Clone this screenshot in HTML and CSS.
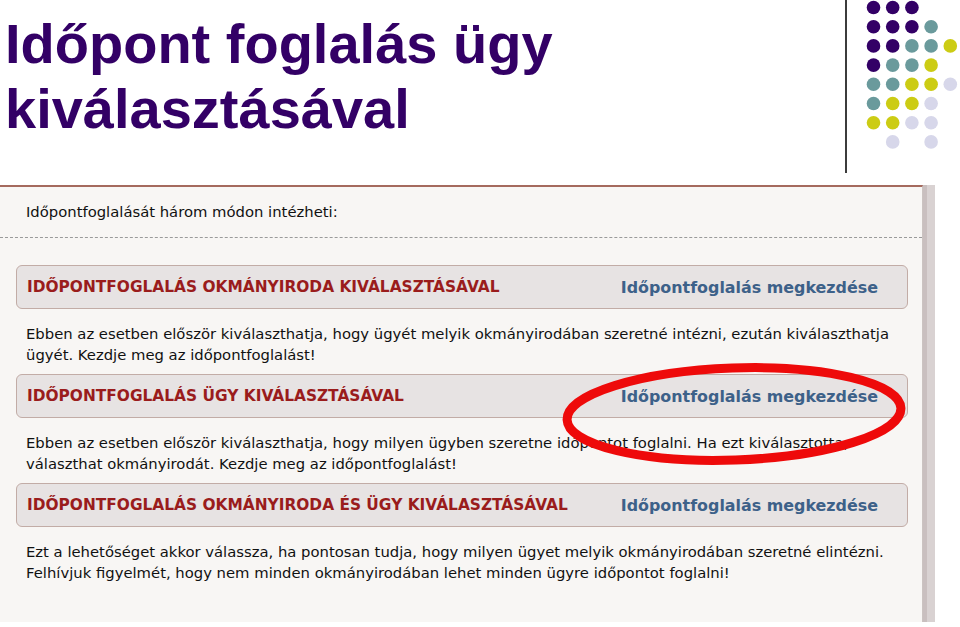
FILE: index.html
```html
<!DOCTYPE html>
<html lang="hu">
<head>
<meta charset="utf-8">
<title>Időpont foglalás ügy kiválasztásával</title>
<link rel="stylesheet" href="styles.css">
</head>
<body>
<header class="slide-head">
  <h1 class="title">Időpont foglalás ügy<br>kiválasztásával</h1>
  <div class="rule"></div>
  <svg class="dots" width="105" height="160" viewBox="0 0 105 160" aria-hidden="true">
    <g fill="#330066">
      <circle cx="18.5" cy="7.5" r="6.8"/><circle cx="37.7" cy="7.5" r="6.8"/><circle cx="56.9" cy="7.5" r="6.8"/>
      <circle cx="18.5" cy="26.7" r="6.8"/><circle cx="37.7" cy="26.7" r="6.8"/><circle cx="56.9" cy="26.7" r="6.8"/>
      <circle cx="18.5" cy="45.9" r="6.8"/><circle cx="37.7" cy="45.9" r="6.8"/>
      <circle cx="18.5" cy="65.1" r="6.8"/>
    </g>
    <g fill="#6a9a9c">
      <circle cx="76.1" cy="26.7" r="6.8"/>
      <circle cx="56.9" cy="45.9" r="6.8"/><circle cx="76.1" cy="45.9" r="6.8"/>
      <circle cx="37.7" cy="65.1" r="6.8"/><circle cx="56.9" cy="65.1" r="6.8"/>
      <circle cx="18.5" cy="84.3" r="6.8"/><circle cx="37.7" cy="84.3" r="6.8"/>
      <circle cx="18.5" cy="103.5" r="6.8"/>
    </g>
    <g fill="#cccc14">
      <circle cx="95.3" cy="45.9" r="6.8"/>
      <circle cx="76.1" cy="65.1" r="6.8"/>
      <circle cx="56.9" cy="84.3" r="6.8"/><circle cx="76.1" cy="84.3" r="6.8"/>
      <circle cx="37.7" cy="103.5" r="6.8"/><circle cx="56.9" cy="103.5" r="6.8"/>
      <circle cx="18.5" cy="122.7" r="6.8"/><circle cx="37.7" cy="122.7" r="6.8"/>
    </g>
    <g fill="#d7d7ea">
      <circle cx="95.3" cy="84.3" r="6.8"/>
      <circle cx="76.1" cy="103.5" r="6.8"/>
      <circle cx="56.9" cy="122.7" r="6.8"/><circle cx="76.1" cy="122.7" r="6.8"/>
      <circle cx="37.7" cy="141.9" r="6.8"/><circle cx="76.1" cy="141.9" r="6.8"/>
    </g>
  </svg>
</header>

<section class="shot">
  <div class="page">
    <p class="intro">Időpontfoglalását három módon intézheti:</p>
    <hr class="dash">
    <div class="option">
      <span class="opt-title">IDŐPONTFOGLALÁS OKMÁNYIRODA KIVÁLASZTÁSÁVAL</span>
      <a class="opt-link">Időpontfoglalás megkezdése</a>
    </div>
    <p class="desc">Ebben az esetben először kiválaszthatja, hogy ügyét melyik okmányirodában szeretné intézni, ezután kiválaszthatja<br>ügyét. Kezdje meg az időpontfoglalást!</p>
    <div class="option">
      <span class="opt-title">IDŐPONTFOGLALÁS ÜGY KIVÁLASZTÁSÁVAL</span>
      <a class="opt-link">Időpontfoglalás megkezdése</a>
    </div>
    <p class="desc">Ebben az esetben először kiválaszthatja, hogy milyen ügyben szeretne időpontot foglalni. Ha ezt kiválasztotta,<br>választhat okmányirodát. Kezdje meg az időpontfoglalást!</p>
    <div class="option">
      <span class="opt-title">IDŐPONTFOGLALÁS OKMÁNYIRODA ÉS ÜGY KIVÁLASZTÁSÁVAL</span>
      <a class="opt-link">Időpontfoglalás megkezdése</a>
    </div>
    <p class="desc">Ezt a lehetőséget akkor válassza, ha pontosan tudja, hogy milyen ügyet melyik okmányirodában szeretné elintézni.<br>Felhívjuk figyelmét, hogy nem minden okmányirodában lehet minden ügyre időpontot foglalni!</p>
  </div>
  <div class="scrollbar"><div class="thumb"></div></div>
</section>

<svg class="mark" width="960" height="627" viewBox="0 0 960 627" aria-hidden="true">
  <ellipse cx="734" cy="414" rx="167" ry="46" fill="none" stroke="#ee0a0a" stroke-width="9" transform="rotate(-2 734 414)"/>
</svg>
</body>
</html>
```

FILE: styles.css
```css
html, body {
  margin: 0;
  padding: 0;
  background: #ffffff;
  width: 960px;
  height: 627px;
  overflow: hidden;
}

body {
  position: relative;
  font-family: "DejaVu Sans", Verdana, sans-serif;
}

.slide-head {
  display: flex;
  align-items: flex-start;
  height: 185px;
}

.title {
  flex: 1;
  margin: 11px 0 0 5px;
  font-family: "Liberation Sans", Arial, sans-serif;
  font-weight: bold;
  font-size: 56px;
  line-height: 65px;
  color: #330066;
}

.rule {
  width: 2px;
  height: 173px;
  background: #3c3c3c;
  margin-right: 8px;
}

.dots {
  display: block;
  flex: none;
}

.shot {
  display: flex;
  height: 437px;
  width: 936px;
}

.page {
  flex: none;
  width: 923px;
  height: 437px;
  border-top: 2px solid #a56a5e;
  border-right: 1px solid #cbc3c1;
  background: #f8f6f4;
  padding: 0 14px 0 16px;
  box-sizing: border-box;
}

.intro {
  margin: 14px 0 0 10px;
  font-size: 14.8px;
  line-height: 21px;
  color: #111;
  white-space: nowrap;
}

.dash {
  margin: 15px -14px 0 -16px;
  border: 0;
  border-top: 1px dashed #9a9a9a;
  height: 0;
}

.option {
  display: flex;
  justify-content: space-between;
  align-items: center;
  height: 44px;
  box-sizing: border-box;
  margin-top: 27px;
  padding: 0 29px 0 10px;
  background: #e7e3e3;
  border: 1px solid #c2aca6;
  border-radius: 6px;
  white-space: nowrap;
}

.desc + .option {
  margin-top: 9px;
}

.opt-title {
  font-weight: bold;
  font-size: 15.4px;
  color: #9a1c1c;
}

.opt-link {
  font-weight: bold;
  font-size: 15.9px;
  color: #3d6189;
}

.desc {
  margin: 14px 0 0 10px;
  font-size: 14.8px;
  line-height: 21px;
  color: #111;
  white-space: nowrap;
}

.scrollbar {
  flex: none;
  width: 12px;
  height: 437px;
  background: #d9d2d2;
  display: flex;
}

.thumb {
  width: 4px;
  background: #c9bfbf;
}

.mark {
  position: absolute;
  left: 0;
  top: 0;
  pointer-events: none;
}
```
